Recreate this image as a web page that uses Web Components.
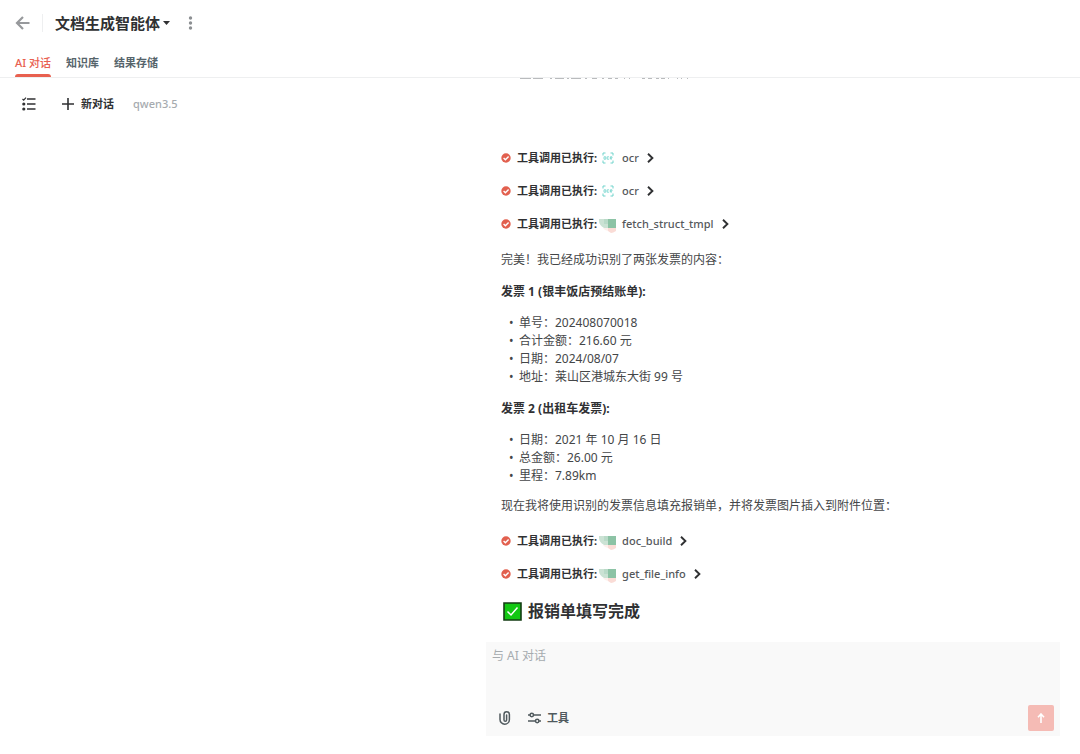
<!DOCTYPE html>
<html lang="zh-CN">
<head>
<meta charset="UTF-8">
<meta name="viewport" content="width=device-width, initial-scale=1.0">
<title>文档生成智能体</title>
<style>
    :root {
        --primary-color: #e8604f;
        --text-color: #303133;
        --body-color: #444648;
        --muted-color: #a6abaf;
        --line-color: #eeeff0;
    }

    html, body {
        height: 100%;
    }

    body {
        margin: 0;
        background: #ffffff;
        color: var(--text-color);
        font-family: "Noto Sans", "Noto Sans CJK SC", sans-serif;
        font-size: 12px;
    }
</style>
</head>
<body>
<agent-page></agent-page>

<script>
class AppHeader extends HTMLElement {
    constructor() {
        super();
        this.attachShadow({ mode: 'open' });
    }

    connectedCallback() {
        this.render();
    }

    render() {
        this.shadowRoot.innerHTML = `
            <style>
                :host {
                    display: block;
                    border-bottom: 1px solid var(--line-color);
                }

                .title-bar {
                    display: flex;
                    align-items: center;
                    height: 46px;
                    padding: 0 15px;
                }

                button {
                    display: flex;
                    align-items: center;
                    padding: 0;
                    border: none;
                    background: none;
                    color: inherit;
                    font: inherit;
                    cursor: pointer;
                }

                .back {
                    padding-right: 12px;
                    border-right: 1px solid var(--line-color);
                    height: 18px;
                }

                h1 {
                    margin: 0 0 0 12px;
                    font-size: 15px;
                    line-height: 20px;
                    font-weight: 700;
                }

                .title {
                    gap: 3px;
                }

                .more {
                    margin-left: 18px;
                }

                nav {
                    display: flex;
                    gap: 15px;
                    padding: 0 15px;
                }

                nav a {
                    position: relative;
                    padding: 4px 0 1px;
                    color: #56646b;
                    font-size: 11px;
                    line-height: 26px;
                    font-weight: 600;
                    text-decoration: none;
                }

                nav a.active {
                    color: var(--primary-color);
                    font-weight: 500;
                }

                nav a.active::after {
                    content: "";
                    position: absolute;
                    left: 0;
                    right: 0;
                    bottom: 0;
                    height: 3px;
                    border-radius: 3px 3px 0 0;
                    background: var(--primary-color);
                }
            </style>
            <div class="title-bar">
                <button class="back" aria-label="返回">
                    <svg width="15" height="14" viewBox="0 0 15 14" fill="none" stroke="#97999c" stroke-width="2.200">
                        <path d="M14.500 7H2M8 1L2 7l6 6"/>
                    </svg>
                </button>
                <h1>
                    <button class="title">文档生成智能体
                        <svg width="7" height="4" viewBox="0 0 7 4" fill="#303133"><path d="M0 0h7L3.500 4z"/></svg>
                    </button>
                </h1>
                <button class="more" aria-label="更多">
                    <svg width="5" height="14" viewBox="0 0 5 14" fill="#8c8f92">
                        <circle cx="2.500" cy="2" r="1.700"/><circle cx="2.500" cy="7" r="1.700"/><circle cx="2.500" cy="12" r="1.700"/>
                    </svg>
                </button>
            </div>
            <nav>
                <a class="active" href="#chat">AI 对话</a>
                <a href="#knowledge">知识库</a>
                <a href="#storage">结果存储</a>
            </nav>
        `;
    }
}

class ChatSidebar extends HTMLElement {
    constructor() {
        super();
        this.attachShadow({ mode: 'open' });
    }

    connectedCallback() {
        this.render();
    }

    render() {
        this.shadowRoot.innerHTML = `
            <style>
                :host {
                    display: block;
                }

                .tools {
                    display: flex;
                    align-items: center;
                    height: 52px;
                    padding-left: 22px;
                }

                button {
                    display: flex;
                    align-items: center;
                    gap: 7px;
                    padding: 0;
                    border: none;
                    background: none;
                    color: var(--text-color);
                    font: inherit;
                    font-size: 11px;
                    line-height: 16px;
                    font-weight: 700;
                    cursor: pointer;
                }

                .new-chat {
                    margin-left: 26px;
                }

                .model {
                    margin-left: 19px;
                    color: var(--muted-color);
                    font-size: 11px;
                    line-height: 16px;
                    font-weight: 500;
                }
            </style>
            <div class="tools">
                <button aria-label="对话列表">
                    <svg width="14" height="14" viewBox="0 0 14 14" fill="none" stroke="#303133" stroke-width="1.600">
                        <path d="M5 2h8.500M5 7h8.500M5 12h8.500"/>
                        <path d="M0.500 2l1.200 1.200L4 0.600" stroke-width="1.200"/>
                        <circle cx="1.800" cy="7" r="1.600" fill="#303133" stroke="none"/>
                        <circle cx="1.800" cy="12" r="1.600" fill="#303133" stroke="none"/>
                    </svg>
                </button>
                <button class="new-chat">
                    <svg width="12" height="12" viewBox="0 0 12 12" stroke="#303133" stroke-width="1.600"><path d="M6 0v12M0 6h12"/></svg>
                    新对话
                </button>
                <span class="model">qwen3.5</span>
            </div>
        `;
    }
}

const TOOL_ICONS = {
    ocr: `
        <svg width="12" height="12" viewBox="0 0 12 12" fill="none" stroke="#6fd3cb">
            <path d="M1 3.500V1h2.500M8.500 1H11v2.500M11 8.500V11H8.500M3.500 11H1V8.500"/>
            <path d="M2 4.800h1.800v2.400H2zM7 4.800H5.200v2.400H7M8.300 7.500V4.800H10v1.300H8.500L10 7.500" stroke-width=".8"/>
        </svg>`,
    server: `
        <svg width="18" height="22" viewBox="0 0 18 22">
            <path d="M0 6h9v9H5Q0 12 0 8z" fill="#cbe2d4"/>
            <path d="M5 6h4v5H5z" fill="#b9dac8"/>
            <path d="M9 6h8v9H9z" fill="#8cc3a5"/>
            <path d="M4 15h5v3Q6 18 4 15z" fill="#fdf0ed"/>
            <path d="M9 15h8v3q-3 2-5 2l-3-2z" fill="#fadcd6"/>
        </svg>`
};

class ToolCall extends HTMLElement {
    constructor() {
        super();
        this.attachShadow({ mode: 'open' });
    }

    connectedCallback() {
        this.render();
    }

    render() {
        const icon = this.getAttribute('icon');

        this.shadowRoot.innerHTML = `
            <style>
                :host {
                    display: block;
                }

                button {
                    display: flex;
                    align-items: center;
                    height: 33px;
                    padding: 0;
                    border: none;
                    background: none;
                    color: inherit;
                    font: inherit;
                    font-size: 11px;
                    line-height: 16px;
                    cursor: pointer;
                }

                .label {
                    margin-left: 6px;
                    font-weight: 700;
                    color: var(--text-color);
                }

                .icon {
                    display: flex;
                    justify-content: center;
                    width: 18px;
                    margin: 0 5px 0 2px;
                }

                .name {
                    margin-right: 8px;
                    font-weight: 500;
                    color: #55585b;
                }
            </style>
            <button>
                <svg width="10" height="10" viewBox="0 0 10 10">
                    <circle cx="5" cy="5" r="4.700" fill="#e2604f"/>
                    <path d="M2.600 5l1.800 1.800 3.200-3.300" fill="none" stroke="#ffffff" stroke-width="1.400"/>
                </svg>
                <span class="label">工具调用已执行:</span>
                <span class="icon">${TOOL_ICONS[icon]}</span>
                <span class="name"><slot></slot></span>
                <svg width="7" height="10" viewBox="0 0 7 10" fill="none" stroke="#303133" stroke-width="1.900"><path d="M1 .8L5.400 5 1 9.200"/></svg>
            </button>
        `;
    }
}

class ChatMessage extends HTMLElement {
    constructor() {
        super();
        this.attachShadow({ mode: 'open' });
    }

    connectedCallback() {
        this.render();
    }

    render() {
        this.shadowRoot.innerHTML = `
            <style>
                :host {
                    display: block;
                    color: var(--body-color);
                    font-size: 12px;
                    line-height: 18px;
                }

                .scrolled {
                    display: block;
                    margin-left: 18px;
                }

                .calls {
                    padding-top: 62px;
                }

                p {
                    margin: 0;
                    padding: 10px 0 0;
                    line-height: 20px;
                }

                h2, h3 {
                    margin: 0;
                    color: var(--text-color);
                }

                h3 {
                    padding-top: 13px;
                    font-size: 12px;
                    line-height: 18px;
                }

                ul {
                    margin: 0;
                    padding: 13px 0 1px 18px;
                    list-style: none;
                }

                li::before {
                    content: "•";
                    display: inline-block;
                    width: 10px;
                    margin-left: -10px;
                }

                .results {
                    padding-top: 8px;
                }

                h2 {
                    display: flex;
                    align-items: center;
                    gap: 6px;
                    padding: 9px 0 15px 2px;
                    font-size: 16px;
                    line-height: 24px;
                }
            </style>
            <svg class="scrolled" width="174" height="1" viewBox="0 0 174 1" stroke="#b9bbbd" stroke-width="1" aria-hidden="true">
                <path d="M1 .5h11M14 .5h10M31 .5h2M36 .5h9M48 .5h2M52 .5h10M66 .5h2M73 .5h5M83 .5h2M89 .5h4M96 .5h3M105 .5h1M110 .5h1M123 .5h3M129 .5h4M137 .5h3M142 .5h4M149 .5h1M158 .5h1M162 .5h1M168 .5h1"/>
            </svg>
            <div class="calls">
                <tool-call icon="ocr">ocr</tool-call>
                <tool-call icon="ocr">ocr</tool-call>
                <tool-call icon="server">fetch_struct_tmpl</tool-call>
            </div>
            <p>完美！我已经成功识别了两张发票的内容：</p>
            <h3>发票 1 (银丰饭店预结账单):</h3>
            <ul>
                <li>单号：202408070018</li>
                <li>合计金额：216.60 元</li>
                <li>日期：2024/08/07</li>
                <li>地址：莱山区港城东大街 99 号</li>
            </ul>
            <h3>发票 2 (出租车发票):</h3>
            <ul>
                <li>日期：2021 年 10 月 16 日</li>
                <li>总金额：26.00 元</li>
                <li>里程：7.89km</li>
            </ul>
            <p>现在我将使用识别的发票信息填充报销单，并将发票图片插入到附件位置：</p>
            <div class="results">
                <tool-call icon="server">doc_build</tool-call>
                <tool-call icon="server">get_file_info</tool-call>
            </div>
            <h2>
                <svg width="19" height="19" viewBox="0 0 19 19" role="img" aria-label="完成">
                    <path d="M1 1h17v17H1z" fill="#12c812" stroke="#143c14" stroke-width="1.600"/>
                    <path d="M4.500 9.500l3.500 3.500 6.500-7.500" fill="none" stroke="#ffffff" stroke-width="1.500"/>
                </svg>
                报销单填写完成
            </h2>
            <svg width="64" height="1" viewBox="0 0 80 1" stroke="#e3e4e5" aria-hidden="true">
                <path d="M6 .5h3M46 .5h4M66 .5h3M72 .5h4"/>
            </svg>
        `;
    }
}

class ChatComposer extends HTMLElement {
    constructor() {
        super();
        this.attachShadow({ mode: 'open' });
    }

    connectedCallback() {
        this.render();
    }

    render() {
        this.shadowRoot.innerHTML = `
            <style>
                :host {
                    display: block;
                    background: #f9f9f9;
                }

                form {
                    display: flex;
                    flex-direction: column;
                    padding: 5px 6px;
                }

                textarea {
                    height: 58px;
                    padding: 0;
                    border: none;
                    outline: none;
                    resize: none;
                    background: none;
                    color: var(--text-color);
                    font: inherit;
                    font-size: 12px;
                    line-height: 18px;
                }

                textarea::placeholder {
                    color: var(--muted-color);
                }

                .actions {
                    display: flex;
                    align-items: center;
                    gap: 17px;
                    padding-left: 7px;
                }

                button {
                    display: flex;
                    align-items: center;
                    gap: 6px;
                    padding: 0;
                    border: none;
                    background: none;
                    color: #505a5e;
                    font: inherit;
                    font-size: 11px;
                    line-height: 16px;
                    font-weight: 700;
                    cursor: pointer;
                }

                .send {
                    justify-content: center;
                    width: 26px;
                    height: 26px;
                    margin-left: auto;
                    border-radius: 2px;
                    background: #f5bbb5;
                }
            </style>
            <form>
                <textarea aria-label="与 AI 对话" placeholder="与 AI 对话"></textarea>
                <div class="actions">
                    <button type="button" aria-label="附件">
                        <svg width="12" height="14" viewBox="0 0 12 14" fill="none" stroke="#505a5e" stroke-width="1.500" stroke-linecap="round">
                            <path d="M1 3v5.500a4.700 4.700 0 0 0 9.400 0V3.500a2.700 2.700 0 0 0-5.400 0V9a1.200 1.200 0 0 0 2.600 0V4"/>
                        </svg>
                    </button>
                    <button type="button">
                        <svg width="13" height="12" viewBox="0 0 13 12" fill="none" stroke="#505a5e" stroke-width="1.500">
                            <path d="M0 3h2M5.500 3H13M0 9h7.500M11 9h2"/>
                            <circle cx="3.800" cy="3" r="1.700"/><circle cx="9.200" cy="9" r="1.700"/>
                        </svg>
                        工具
                    </button>
                    <button class="send" type="button" aria-label="发送">
                        <svg width="8" height="10" viewBox="0 0 8 10" fill="none" stroke="#ffffff" stroke-width="1.600"><path d="M4 10V1M1 4.200L4 1l3 3.200"/></svg>
                    </button>
                </div>
            </form>
        `;
    }
}

class AgentPage extends HTMLElement {
    constructor() {
        super();
        this.attachShadow({ mode: 'open' });
    }

    connectedCallback() {
        this.render();
    }

    render() {
        this.shadowRoot.innerHTML = `
            <style>
                :host {
                    display: flex;
                    flex-direction: column;
                    height: 100%;
                }

                main {
                    flex: 1;
                    display: grid;
                    grid-template-columns: 45fr 55fr;
                    min-height: 0;
                }

                .chat {
                    display: flex;
                    flex-direction: column;
                    min-height: 0;
                    padding: 0 20px 18px 0;
                }

                chat-message {
                    flex: 1;
                    min-height: 0;
                    overflow: hidden;
                    padding-left: 15px;
                }
            </style>
            <app-header></app-header>
            <main>
                <chat-sidebar></chat-sidebar>
                <section class="chat">
                    <chat-message></chat-message>
                    <chat-composer></chat-composer>
                </section>
            </main>
        `;
    }
}

customElements.define('app-header', AppHeader);
customElements.define('chat-sidebar', ChatSidebar);
customElements.define('tool-call', ToolCall);
customElements.define('chat-message', ChatMessage);
customElements.define('chat-composer', ChatComposer);
customElements.define('agent-page', AgentPage);
</script>
</body>
</html>
